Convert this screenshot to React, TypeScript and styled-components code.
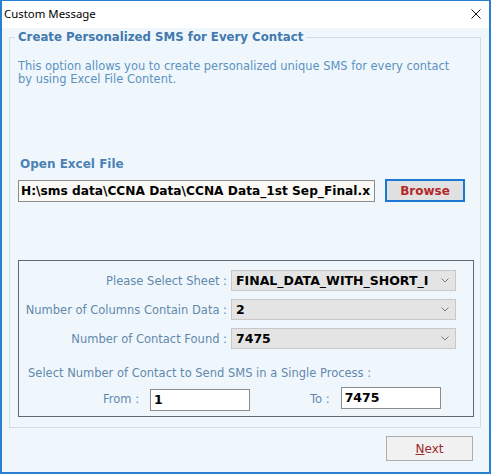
import styled, { createGlobalStyle } from 'styled-components';

const GlobalStyle = createGlobalStyle`
  * {
    box-sizing: border-box;
  }
  body {
    margin: 0;
    background: #ffffff;
    font-family: 'DejaVu Sans', Verdana, sans-serif;
  }
`;

const Window = styled.div`
  width: 491px;
  height: 474px;
  border: 2px solid #2a7fd0;
  border-top-width: 1px;
  background: #f0f7fc;
  display: flex;
  flex-direction: column;
`;

const TitleBar = styled.div`
  height: 27px;
  background: #ffffff;
  display: flex;
  align-items: center;
  justify-content: space-between;
  padding: 0 8px 2px 2px;
  font-family: 'Noto Sans', 'Open Sans', sans-serif;
  font-size: 11.4px;
  color: #000000;
`;

const CloseIcon = styled.svg`
  width: 10px;
  height: 10px;
  margin-top: 1px;
`;

const Body = styled.div`
  flex: 1;
  display: flex;
  flex-direction: column;
`;

const Group = styled.fieldset`
  margin: 1px 8px 0 7px;
  padding: 0 6px 10px 5px;
  border: 1px solid #d5dde4;
  min-width: 0;
`;

const GroupTitle = styled.legend`
  padding: 0 3px;
  font-size: 11.75px;
  line-height: 16px;
  font-weight: bold;
  color: #4279ae;
`;

const Description = styled.p`
  margin: 15px 0 0 3px;
  font-size: 11.45px;
  line-height: 13px;
  color: #5a92c2;
`;

const SectionLabel = styled.div`
  margin: 70px 0 0 5px;
  font-size: 12px;
  line-height: 16px;
  font-weight: bold;
  color: #4b82b5;
`;

const FileRow = styled.div`
  margin: 8px 0 0 3px;
  display: flex;
  gap: 10px;
`;

const PathField = styled.div`
  width: 357px;
  height: 22px;
  border: 1px solid #8c8c8c;
  background: #fbf9f5;
  padding: 0 2px;
  font-size: 12.2px;
  line-height: 20px;
  font-weight: bold;
  color: #000000;
  white-space: nowrap;
  overflow: hidden;
`;

const BrowseButton = styled.button`
  width: 80px;
  height: 23px;
  margin-top: -1px;
  border: 2px solid #1b78d3;
  background: #e1e1e1;
  font-family: 'DejaVu Sans', Verdana, sans-serif;
  font-size: 12px;
  font-weight: bold;
  color: #b3282d;
  padding: 0;
`;

const InnerBox = styled.div`
  margin: 58px 0 0 3px;
  border: 1px solid #5f6b74;
  padding: 9px 0 5px 0;
`;

const FieldGrid = styled.div`
  display: grid;
  grid-template-columns: 208px 225px;
  column-gap: 4px;
  row-gap: 8px;
  align-items: center;
`;

const FieldLabel = styled.div`
  text-align: right;
  font-size: 11.5px;
  color: #6189ae;
  white-space: nowrap;
`;

const Select = styled.div`
  height: 21px;
  border: 1px solid #c8c8c8;
  background: #e4e4e4;
  display: flex;
  align-items: center;
  padding: 0 6px 0 4px;
  gap: 4px;
`;

const SelectValue = styled.span`
  flex: 1;
  font-size: 12.5px;
  font-weight: bold;
  color: #000000;
  white-space: nowrap;
  overflow: hidden;
`;

const Chevron = styled.svg`
  width: 8px;
  height: 5px;
  flex-shrink: 0;
`;

const RangeTitle = styled.div`
  margin: 18px 0 0 9px;
  font-size: 11.5px;
  line-height: 13px;
  color: #6189ae;
`;

const RangeRow = styled.div`
  margin-top: 7px;
  display: flex;
  align-items: center;
`;

const RangeLabel = styled.span<{ $left: number; $gap: number }>`
  margin-left: ${(p) => p.$left}px;
  margin-right: ${(p) => p.$gap}px;
  font-size: 11.5px;
  color: #6189ae;
`;

const NumberField = styled.div<{ $shift: number }>`
  width: 100px;
  height: 22px;
  margin-top: ${(p) => p.$shift}px;
  border: 1px solid #8c8c8c;
  background: #ffffff;
  padding: 0 3px;
  font-size: 12.5px;
  line-height: 20px;
  font-weight: bold;
  color: #000000;
`;

const Footer = styled.div`
  display: flex;
  justify-content: flex-end;
  padding: 8px 16px 0 0;
`;

const NextButton = styled.button`
  width: 87px;
  height: 25px;
  border: 1px solid #adadad;
  background: #f1f1f1;
  font-family: 'DejaVu Sans', Verdana, sans-serif;
  font-size: 12px;
  color: #9a2a2e;
  padding: 0;
  u {
    text-decoration: underline;
  }
`;

function Arrow() {
  return (
    <Chevron viewBox="0 0 8 5">
      <path d="M0.5 0.5 L4 4 L7.5 0.5" fill="none" stroke="#7a7a7a" strokeWidth="1" />
    </Chevron>
  );
}

const fields = [
  { label: 'Please Select Sheet :', value: 'FINAL_DATA_WITH_SHORT_I' },
  { label: 'Number of Columns Contain Data :', value: '2' },
  { label: 'Number of Contact Found :', value: '7475' },
];

export default function App() {
  return (
    <>
      <GlobalStyle />
      <Window>
        <TitleBar>
          <span>Custom Message</span>
          <CloseIcon viewBox="0 0 10 10">
            <path d="M0.5 0.5 L9.5 9.5 M9.5 0.5 L0.5 9.5" stroke="#111" strokeWidth="1" />
          </CloseIcon>
        </TitleBar>
        <Body>
          <Group>
            <GroupTitle>Create Personalized SMS for Every Contact</GroupTitle>
            <Description>
              This option allows you to create personalized unique SMS for every contact
              <br />
              by using Excel File Content.
            </Description>
            <SectionLabel>Open Excel File</SectionLabel>
            <FileRow>
              <PathField>H:\sms data\CCNA Data\CCNA Data_1st Sep_Final.x</PathField>
              <BrowseButton>Browse</BrowseButton>
            </FileRow>
            <InnerBox>
              <FieldGrid>
                {fields.map((f) => (
                  <>
                    <FieldLabel key={f.label + 'l'}>{f.label}</FieldLabel>
                    <Select key={f.label + 's'}>
                      <SelectValue>{f.value}</SelectValue>
                      <Arrow />
                    </Select>
                  </>
                ))}
              </FieldGrid>
              <RangeTitle>Select Number of Contact to Send SMS in a Single Process :</RangeTitle>
              <RangeRow>
                <RangeLabel $left={84} $gap={11}>From :</RangeLabel>
                <NumberField $shift={2}>1</NumberField>
                <RangeLabel $left={60} $gap={11}>To :</RangeLabel>
                <NumberField $shift={-2}>7475</NumberField>
              </RangeRow>
            </InnerBox>
          </Group>
          <Footer>
            <NextButton>
              <u>N</u>ext
            </NextButton>
          </Footer>
        </Body>
      </Window>
    </>
  );
}
